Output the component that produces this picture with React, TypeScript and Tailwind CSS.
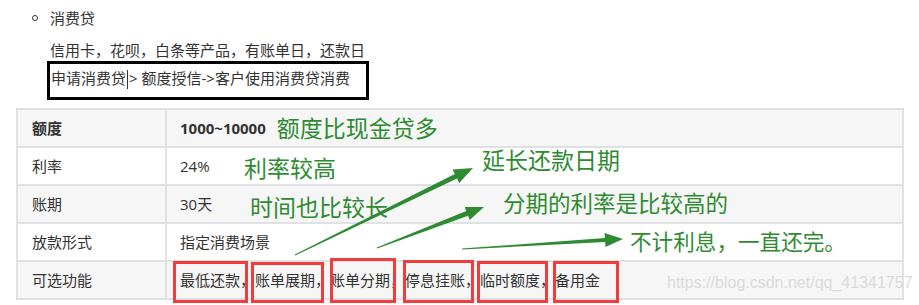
import React from "react";

type Arrow = { x1: number; y1: number; x2: number; y2: number; w0: number; w1: number; hl: number; hw: number };

function arrowPoints(a: Arrow) {
  const dx = a.x2 - a.x1;
  const dy = a.y2 - a.y1;
  const len = Math.hypot(dx, dy);
  const ux = dx / len;
  const uy = dy / len;
  const nx = -uy;
  const ny = ux;
  const bx = a.x2 - ux * a.hl;
  const by = a.y2 - uy * a.hl;
  const pts = [
    [a.x1 + (nx * a.w0) / 2, a.y1 + (ny * a.w0) / 2],
    [bx + (nx * a.w1) / 2, by + (ny * a.w1) / 2],
    [bx + (nx * a.hw) / 2, by + (ny * a.hw) / 2],
    [a.x2, a.y2],
    [bx - (nx * a.hw) / 2, by - (ny * a.hw) / 2],
    [bx - (nx * a.w1) / 2, by - (ny * a.w1) / 2],
    [a.x1 - (nx * a.w0) / 2, a.y1 - (ny * a.w0) / 2],
  ];
  return pts.map((p) => p.map((v) => v.toFixed(1)).join(",")).join(" ");
}

const arrows: Arrow[] = [
  { x1: 295, y1: 255, x2: 473, y2: 168, w0: 1, w1: 5, hl: 19, hw: 15 },
  { x1: 377, y1: 248, x2: 484, y2: 207, w0: 1, w1: 5, hl: 18, hw: 14 },
  { x1: 462, y1: 249, x2: 623, y2: 239, w0: 1, w1: 4, hl: 18, hw: 14 },
];

const rows = [
  { label: "额度", value: "1000~10000", head: true },
  { label: "利率", value: "24%" },
  { label: "账期", value: "30天" },
  { label: "放款形式", value: "指定消费场景" },
  { label: "可选功能", value: "最低还款，账单展期，账单分期，停息挂账，临时额度，备用金" },
];

const redBoxes = [
  { left: 173, top: 261, w: 75, h: 42 },
  { left: 251, top: 262, w: 73, h: 41 },
  { left: 330, top: 258, w: 66, h: 45 },
  { left: 403, top: 260, w: 71, h: 43 },
  { left: 477, top: 261, w: 71, h: 42 },
  { left: 553, top: 261, w: 66, h: 42 },
];

export default function App() {
  return (
    <div className="relative w-[919px] h-[305px] overflow-hidden bg-white font-['Open_Sans','Noto_Sans_CJK_SC',sans-serif] text-[15px] text-[#333]">
      {/* list item */}
      <div className="pl-[32px]">
        <div className="flex items-center h-[36px]">
          <span className="w-[6px] h-[6px] rounded-full border border-[#333]" />
          <span className="ml-[12px] leading-[36px]">消费贷</span>
        </div>
      </div>
      <div className="pl-[50px]">
        <div className="h-[25px] leading-[28px]">信用卡，花呗，白条等产品，有账单日，还款日</div>
        <div className="ml-[-3px] w-[322px] h-[39px] border-[3px] border-black pl-[1px] leading-[29px] whitespace-nowrap">
          申请消费贷
          <span className="inline-block w-px h-[19px] bg-[#333] align-middle mx-[1px]" />
          &gt; 额度授信-&gt;客户使用消费贷消费
        </div>
      </div>

      {/* table */}
      <div className="ml-[16px] mt-[8px] w-[888px] border-2 border-[#dfe2e5]">
        {rows.map((r, i) => (
          <div
            key={r.label}
            className={`grid grid-cols-[147px_1fr] h-[36px] ${i > 0 ? "border-t-2 border-[#dfe2e5] box-content" : ""} ${
              i % 2 === 0 ? "bg-[#f6f6f6]" : "bg-white"
            }`}
          >
            <div className={`pl-[14px] flex items-center ${r.head ? "font-bold" : ""}`}>{r.label}</div>
            <div className={`pl-[13px] flex items-center border-l-2 border-[#dfe2e5] whitespace-nowrap ${r.head ? "font-bold" : ""}`}>
              {r.value}
              {r.head && (
                <span className="ml-[11px] text-[23px] font-normal text-[#2e8b32]">额度比现金贷多</span>
              )}
            </div>
          </div>
        ))}
      </div>

      {/* annotations */}
      <span className="absolute left-[244px] top-[153px] text-[23px] leading-[30px] text-[#2e8b32]">利率较高</span>
      <span className="absolute left-[250px] top-[192px] text-[23px] leading-[30px] text-[#2e8b32]">时间也比较长</span>
      <span className="absolute left-[482px] top-[145px] text-[23px] leading-[30px] text-[#2e8b32]">延长还款日期</span>
      <span className="absolute left-[503px] top-[189px] text-[22.5px] leading-[30px] text-[#2e8b32]">分期的利率是比较高的</span>
      <span className="absolute left-[630px] top-[227px] text-[21.6px] leading-[30px] text-[#2e8b32] whitespace-nowrap">不计利息，一直还完。</span>

      <svg className="absolute inset-0 pointer-events-none" width="919" height="305">
        {arrows.map((a, i) => (
          <polygon key={i} points={arrowPoints(a)} fill="#2e8b32" />
        ))}
      </svg>

      {redBoxes.map((b, i) => (
        <div
          key={i}
          className="absolute border-[3px] border-[#f23c3c]"
          style={{ left: b.left, top: b.top, width: b.w, height: b.h }}
        />
      ))}

      <span className="absolute left-[667px] top-[273px] font-['Liberation_Sans',sans-serif] text-[16px] leading-[20px] text-[#dadada] whitespace-nowrap">
        https://blog.csdn.net/qq_41341757
      </span>
    </div>
  );
}
